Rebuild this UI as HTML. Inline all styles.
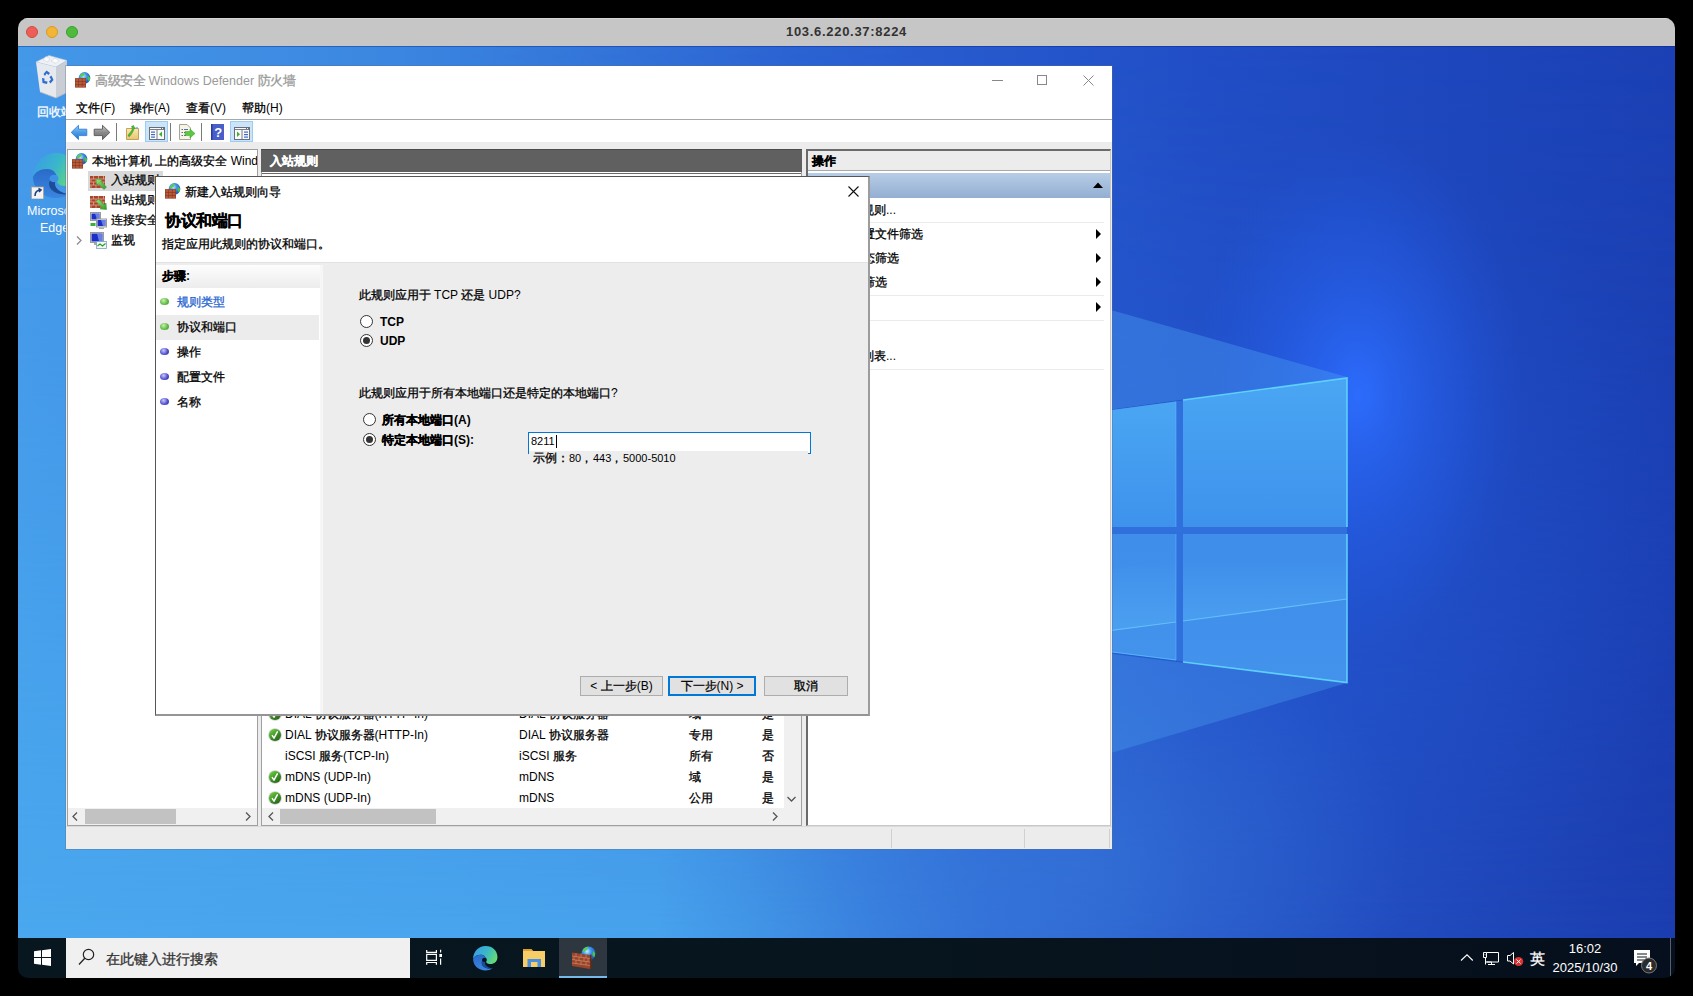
<!DOCTYPE html>
<html><head><meta charset="utf-8">
<style>
*{margin:0;padding:0;box-sizing:border-box}
html,body{width:1693px;height:996px;overflow:hidden;background:#000;font-family:"Liberation Sans",sans-serif}
.a{position:absolute}
.t{position:absolute;white-space:nowrap}
i.c{font-style:normal;display:inline-block;width:1em;text-align:left;-webkit-text-stroke:0.3px currentColor}
#wrap{position:absolute;left:0;top:0;width:1693px;height:996px;clip-path:inset(18px 18px 18px 18px round 10px)}
</style></head><body>
<svg width="0" height="0" style="position:absolute">
<defs>
<g id="fwicon"><radialGradient id="glb" cx="0.4" cy="0.35" r="0.7"><stop offset="0" stop-color="#bfe4ff"/><stop offset="0.45" stop-color="#3a8ef0"/><stop offset="1" stop-color="#1a4ab0"/></radialGradient><circle cx="9.5" cy="5.9" r="5.8" fill="url(#glb)"/><path d="M4.5 4.5C5.5 2 8 0.8 10 1L9 3.5L6.5 5Z" fill="#5ad040"/><path d="M12.5 3.5L14.8 5.5C15.2 7 14.8 8.5 14 9.5L12.5 7.5Z" fill="#4ac838"/><rect x="0" y="6.2" width="11" height="9.3" fill="#7a3018"/><path d="M0.4 6.6H3.4V9.2H0.4ZM3.9 6.6H6.9V9.2H3.9ZM7.4 6.6H10.6V9.2H7.4ZM0.4 9.7H3.4V12.3H0.4ZM3.9 9.7H6.9V12.3H3.9ZM7.4 9.7H10.6V12.3H7.4ZM0.4 12.8H3.4V15.2H0.4ZM3.9 12.8H6.9V15.2H3.9ZM7.4 12.8H10.6V15.2H7.4Z" fill="#b85a3a"/></g>
<g id="brick"><rect x="0" y="0" width="15" height="12" fill="#a8452a"/><path d="M0 3H15M0 6H15M0 9H15M3.5 0V3M8.5 0V3M13.5 0V3M1 3V6M6 3V6M11 3V6M3.5 6V9M8.5 6V9M13.5 6V9M1 9V12M6 9V12M11 9V12" stroke="#e0a58c" stroke-width="0.8"/></g>
<linearGradient id="chg" x1="0.2" y1="0.1" x2="0.8" y2="0.9"><stop offset="0" stop-color="#66c83a"/><stop offset="0.6" stop-color="#3a8a24"/><stop offset="1" stop-color="#2c6a1c"/></linearGradient><g id="chk"><circle cx="7" cy="7" r="6.8" fill="#a0a0a0" opacity="0.55"/><circle cx="7" cy="7" r="6" fill="url(#chg)"/><path d="M4.3 7.6L6 10.2L9.3 3.8" stroke="#fff" stroke-width="1.5" fill="none" stroke-linecap="round" stroke-linejoin="round"/></g>
<linearGradient id="garr" x1="0" y1="0" x2="1" y2="1"><stop offset="0" stop-color="#9ae880"/><stop offset="1" stop-color="#2f9a2a"/></linearGradient>
</defs></svg>
<div id="wrap">
<div class="a" style="left:18px;top:18px;width:1657px;height:28px;background:#c6c6c6;border-top:1px solid #d6d6d6"></div>
<div class="a" style="left:26px;top:26px;width:12px;height:12px;border-radius:50%;background:#ec5f57;border:0.5px solid #d44a42"></div>
<div class="a" style="left:46px;top:26px;width:12px;height:12px;border-radius:50%;background:#f3b535;border:0.5px solid #d89b24"></div>
<div class="a" style="left:66px;top:26px;width:12px;height:12px;border-radius:50%;background:#4fbb3d;border:0.5px solid #3a9f2c"></div>
<div class="t" style="left:18px;top:24px;width:1657px;text-align:center;font-size:13px;line-height:16px;font-weight:bold;color:#333;letter-spacing:0.7px">103.6.220.37:8224</div>
<svg class="a" style="left:0;top:0" width="1693" height="996" viewBox="0 0 1693 996">
<defs>
<linearGradient id="bgB" gradientUnits="userSpaceOnUse" x1="18" y1="0" x2="1675" y2="0">
<stop offset="0" stop-color="#4aa8ef"/><stop offset="0.385" stop-color="#48a3ed"/><stop offset="0.47" stop-color="#3f90e4"/><stop offset="0.59" stop-color="#3270da"/><stop offset="0.714" stop-color="#2656c8"/><stop offset="1" stop-color="#1b3db0"/>
</linearGradient>
<linearGradient id="bgT" gradientUnits="userSpaceOnUse" x1="18" y1="0" x2="1675" y2="0">
<stop offset="0" stop-color="#4498e8"/><stop offset="0.23" stop-color="#3b86e0"/><stop offset="0.47" stop-color="#2b62d2"/><stop offset="0.71" stop-color="#214ec6"/><stop offset="1" stop-color="#1b40b4"/>
</linearGradient>
<linearGradient id="vmask" gradientUnits="userSpaceOnUse" x1="0" y1="46" x2="0" y2="938">
<stop offset="0" stop-color="#fff"/><stop offset="0.35" stop-color="#fff" stop-opacity="0.8"/><stop offset="1" stop-color="#fff" stop-opacity="0"/>
</linearGradient>
<mask id="m1" maskUnits="userSpaceOnUse" x="0" y="0" width="1693" height="996"><rect x="18" y="46" width="1657" height="892" fill="url(#vmask)"/></mask>
<radialGradient id="glow" gradientUnits="userSpaceOnUse" cx="0" cy="0" r="1" gradientTransform="translate(1358 395) scale(165 260)">
<stop offset="0" stop-color="#2c6cfc" stop-opacity="1"/><stop offset="0.35" stop-color="#2864f2" stop-opacity="0.65"/><stop offset="1" stop-color="#2258e0" stop-opacity="0"/>
</radialGradient>
<radialGradient id="glow2" gradientUnits="userSpaceOnUse" cx="1300" cy="560" r="420">
<stop offset="0" stop-color="#2258d8" stop-opacity="0.45"/><stop offset="1" stop-color="#2258d8" stop-opacity="0"/>
</radialGradient>
<linearGradient id="paneU" x1="0" y1="0" x2="0" y2="1">
<stop offset="0" stop-color="#4aa6f3"/><stop offset="1" stop-color="#3e92ec"/>
</linearGradient>
<linearGradient id="paneL" x1="0" y1="0" x2="0" y2="1">
<stop offset="0" stop-color="#3e8eea"/><stop offset="1" stop-color="#4392ec"/>
</linearGradient>
<linearGradient id="refl" gradientUnits="userSpaceOnUse" x1="0" y1="560" x2="0" y2="625"><stop offset="0" stop-color="#56b0f6" stop-opacity="0"/><stop offset="1" stop-color="#56b0f6" stop-opacity="0.45"/></linearGradient>
<radialGradient id="glow3" gradientUnits="userSpaceOnUse" cx="0" cy="0" r="1" gradientTransform="translate(1080 860) scale(330 260)"><stop offset="0" stop-color="#3878d8" stop-opacity="0.55"/><stop offset="1" stop-color="#3878d8" stop-opacity="0"/></radialGradient>
</defs>
<rect x="18" y="46" width="1657" height="892" fill="url(#bgB)"/>
<rect x="18" y="46" width="1657" height="892" fill="url(#bgT)" mask="url(#m1)"/>
<rect x="18" y="46" width="1657" height="892" fill="url(#glow2)"/>
<rect x="18" y="46" width="1657" height="892" fill="url(#glow3)"/>
<rect x="18" y="46" width="1657" height="892" fill="url(#glow)"/>
<polygon points="1347,377 1111,310 1000,278 1000,425" fill="#4a9cf0" opacity="0.42"/>
<polygon points="1347,683 1111,753 1000,790 1000,640" fill="#4a9cf0" opacity="0.38"/>
<rect x="18" y="46" width="1657" height="1" fill="#001a80" opacity="0.35"/>
<!-- logo -->
<polygon points="1000,425 1347,378 1347,682.5 1000,638" fill="#2f70dc"/>
<polygon points="1000,425 1176,401.5 1176,527 1000,527" fill="url(#paneU)"/>
<polygon points="1183,400 1347,378 1347,527 1183,527" fill="url(#paneU)"/>
<polygon points="1000,534 1176,534 1176,660 1000,638" fill="url(#paneL)"/>
<polygon points="1183,534 1347,534 1347,682.5 1183,662" fill="url(#paneL)"/>
<polygon points="1000,585 1176,560 1176,622 1000,645" fill="url(#refl)"/>
<polygon points="1183,560 1347,538 1347,599 1183,621" fill="url(#refl)"/>
<path d="M1183,400 L1347,378 L1347,527" stroke="#62d8ff" stroke-width="1.6" fill="none" opacity="0.9"/>
<path d="M1347,534 L1347,682.5 L1183,662" stroke="#62d8ff" stroke-width="1.6" fill="none" opacity="0.9"/><path d="M1176,660 L1000,638" stroke="#62d8ff" stroke-width="1.2" fill="none" opacity="0.6"/>
<path d="M1176,401.5 L1176,527 M1176,534 L1176,660" stroke="#60c0ff" stroke-width="1" fill="none" opacity="0.5"/>
<path d="M1183,621 L1347,599 M1000,645 L1176,622" stroke="#70d0ff" stroke-width="1.2" fill="none" opacity="0.7"/>
</svg>
<!-- desktop icons -->
<svg class="a" style="left:34px;top:54px" width="34" height="46" viewBox="0 0 34 46"><path d="M2 8L15 1.5L33 6.5L22 13Z" fill="#eef1f5" stroke="#b8c8d8" stroke-width="0.6"/><path d="M9 6L12 2.5L16 4.5L14 8ZM17 7L21 4L25 6.5L22 9.5Z" fill="#fafbfc" stroke="#c8ccd4" stroke-width="0.5"/><path d="M2 8L22 13L22 44L6 38Z" fill="#e6e9ed"/><path d="M22 13L33 6.5L32 39L22 44Z" fill="#c9ced6"/><path d="M6 38L22 44L32 39" stroke="#b0b6be" stroke-width="0.8" fill="none"/><g fill="#2f6fd0"><path d="M9.5 20L12.5 16.5L16 19L14.5 21L12.5 19.5L11 22Z"/><path d="M17.5 21.5L19.5 26L16.5 29.5L15 27.5L17 25.5L15.5 23Z"/><path d="M13 30L8.5 29L8 24L10.5 24.5L10.5 27L13.5 27.5Z"/></g></svg>
<div class="t" style="left:37px;top:104px;font-size:12px;line-height:16px;color:#fff"><i class="c">回</i><i class="c">收</i><i class="c">站</i></div>
<svg class="a" style="left:31px;top:151px" width="48" height="48" viewBox="0 0 48 48"><defs><linearGradient id="eg1" x1="0" y1="0.3" x2="1" y2="0.7"><stop offset="0" stop-color="#3a9ee6"/><stop offset="0.5" stop-color="#3ab8c8"/><stop offset="1" stop-color="#6ade6a"/></linearGradient><linearGradient id="eg4" x1="0" y1="0" x2="0" y2="1"><stop offset="0" stop-color="#2a6ac8"/><stop offset="1" stop-color="#3a86e0"/></linearGradient></defs>
<path d="M2 26C2 13 12 2 25 2C38 2 47 11 47 22C47 30 41 35 34 35C28 35 25 32 26 28C26 22 22 18 16 18C9 18 4 21 2 26Z" fill="url(#eg1)"/>
<path d="M2 26C4 21 9 18 16 18C22 18 26 22 26 28C22 26 18 28 18 33C18 40 28 45 38 43C34 46 30 47 25 47C12 47 2 38 2 26Z" fill="url(#eg4)"/>
<path d="M26 28C22 26 18 28 18 33C18 40 28 45 38 43C30 42 24 38 24 33C24 30 25 29 26 28Z" fill="#1d4c98"/>
<ellipse cx="23" cy="27.5" rx="4.5" ry="3.8" fill="#3d92e6"/>
<rect x="0.5" y="36" width="12" height="12" fill="#f4f4f4" stroke="#b0a090" stroke-width="0.8"/><path d="M4 45C4 41 6 39 10 39M7.5 37.5L10 39L8 41" stroke="#1e3f80" stroke-width="1.6" fill="none"/></svg>
<div class="t" style="left:27px;top:203px;font-size:12.5px;line-height:16px;color:#fff">Microsoft</div>
<div class="t" style="left:40px;top:220px;font-size:12.5px;line-height:16px;color:#fff">Edge</div>
<!-- firewall window -->
<div class="a" style="left:66px;top:66px;width:1046px;height:783px;background:#fff;box-shadow:0 0 0 1px rgba(90,110,140,0.35)"></div>
<svg class="a" style="left:75px;top:72px" width="16" height="16" viewBox="0 0 16 16"><use href="#fwicon"/></svg>
<div class="t" style="left:95px;top:73px;font-size:12.5px;color:#9a9a9a;line-height:16px"><i class="c">高</i><i class="c">级</i><i class="c">安</i><i class="c">全</i> Windows Defender <i class="c">防</i><i class="c">火</i><i class="c">墙</i></div>
<div class="a" style="left:992px;top:80px;width:11px;height:1px;background:#888"></div>
<div class="a" style="left:1037px;top:75px;width:10px;height:10px;border:1px solid #888"></div>
<svg class="a" style="left:1083px;top:75px" width="11" height="11" viewBox="0 0 11 11"><path d="M0.5 0.5L10.5 10.5M10.5 0.5L0.5 10.5" stroke="#888" stroke-width="1"/></svg>
<!-- menu -->
<div class="t" style="left:76px;top:100px;font-size:12px;color:#000;line-height:16px"><i class="c">文</i><i class="c">件</i>(F)</div>
<div class="t" style="left:130px;top:100px;font-size:12px;color:#000;line-height:16px"><i class="c">操</i><i class="c">作</i>(A)</div>
<div class="t" style="left:186px;top:100px;font-size:12px;color:#000;line-height:16px"><i class="c">查</i><i class="c">看</i>(V)</div>
<div class="t" style="left:242px;top:100px;font-size:12px;color:#000;line-height:16px"><i class="c">帮</i><i class="c">助</i>(H)</div>
<div class="a" style="left:66px;top:119px;width:1046px;height:1px;background:#a8a8a8"></div>
<!-- toolbar -->
<svg class="a" style="left:66px;top:120px" width="200" height="22" viewBox="0 0 200 22">
<defs>
<linearGradient id="ab" x1="0" y1="0" x2="0" y2="1"><stop offset="0" stop-color="#8ccaf8"/><stop offset="0.5" stop-color="#4a9ce8"/><stop offset="1" stop-color="#2a70d0"/></linearGradient>
<linearGradient id="ag" x1="0" y1="0" x2="0" y2="1"><stop offset="0" stop-color="#c8c8c8"/><stop offset="0.5" stop-color="#8a8a8a"/><stop offset="1" stop-color="#6a6a6a"/></linearGradient>
<linearGradient id="fo" x1="0" y1="0" x2="0" y2="1"><stop offset="0" stop-color="#fbe9b0"/><stop offset="1" stop-color="#e8c470"/></linearGradient>
</defs>
<path d="M5.2 12.4L12.5 5.3V9.2H20.8V15.6H12.5V19.6Z" fill="url(#ab)" stroke="#3a80d0" stroke-width="0.9" stroke-linejoin="round"/>
<path d="M43.8 12.4L36.5 5.3V9.2H28.2V15.6H36.5V19.6Z" fill="url(#ag)" stroke="#555" stroke-width="0.9" stroke-linejoin="round"/>
<rect x="50" y="3" width="1" height="18" fill="#7a7a7a"/>
<path d="M60.5 8.5H72.5V19.5H60.5Z" fill="url(#fo)" stroke="#c09a48" stroke-width="0.9"/>
<rect x="69.5" y="7.3" width="2.5" height="1.3" fill="#6aa8e8"/>
<path d="M62 16C63 13 65 12 66 10C66.5 8.5 66 7.5 65.5 6.5L67.5 5.5L69 8.5L67.8 8.8C67.5 11 66.5 13 63.5 16.5Z" fill="#4ac030" stroke="#2a8a20" stroke-width="0.5"/>
<rect x="79.5" y="1.5" width="22" height="20" fill="#cce4f7" stroke="#99cdf5"/>
<rect x="83.5" y="7.5" width="15" height="12" fill="#fafafa" stroke="#6a6e7a" stroke-width="1"/>
<path d="M84 9.5H98M91 10V19" stroke="#6a6e7a" stroke-width="0.9"/><rect x="95" y="8" width="1" height="1" fill="#6a6e7a"/><rect x="97" y="8" width="1" height="1" fill="#6a6e7a"/>
<rect x="85" y="11.5" width="4" height="1.2" fill="#3a68c8"/><rect x="85" y="14" width="4" height="1.2" fill="#3a68c8"/><rect x="85" y="16.5" width="4" height="1.2" fill="#3a68c8"/>
<path d="M96 11.5L93 14.2L96 17Z" fill="#3ab030"/>
<rect x="104" y="3" width="1" height="18" fill="#7a7a7a"/>
<path d="M113.5 4.5H121L124.5 8V19.5H113.5Z" fill="#f8f4e4" stroke="#9a9a8a" stroke-width="0.9"/>
<path d="M115.5 9.5H117M115.5 12.5H117M115.5 15.5H117M118 9.5H122M118 12.5H120M118 15.5H120" stroke="#5a6ab0" stroke-width="1"/>
<path d="M119 11.5H124V9L129 13.5L124 18V15.5H119Z" fill="#5ac840" stroke="#3a9a28" stroke-width="0.5"/>
<rect x="135" y="3" width="1" height="18" fill="#7a7a7a"/>
<rect x="145" y="4" width="13" height="16" fill="#2a3aa0"/><rect x="146.5" y="4" width="11.5" height="16" fill="#4a5ec8"/>
<text x="152.3" y="17" font-size="13" font-weight="bold" font-family="Liberation Sans" fill="#fff" text-anchor="middle">?</text>
<rect x="164.5" y="1.5" width="22" height="20" fill="#cce4f7" stroke="#99cdf5"/>
<rect x="168.5" y="7.5" width="15" height="12" fill="#fafafa" stroke="#6a6e7a" stroke-width="1"/>
<path d="M169 9.5H183M176 10V19" stroke="#6a6e7a" stroke-width="0.9"/><rect x="180" y="8" width="1" height="1" fill="#6a6e7a"/><rect x="182" y="8" width="1" height="1" fill="#6a6e7a"/>
<rect x="178" y="11.5" width="4" height="1.2" fill="#3a68c8"/><rect x="178" y="14" width="4" height="1.2" fill="#3a68c8"/><rect x="178" y="16.5" width="4" height="1.2" fill="#3a68c8"/>
<path d="M171 11.5L174 14.2L171 17Z" fill="#3ab030"/>
</svg>
<!-- client area -->
<div class="a" style="left:66px;top:142px;width:1046px;height:707px;background:#ececec"></div>
<!-- tree pane -->
<div class="a" style="left:67px;top:149px;width:191px;height:677px;background:#fff;border:1px solid #a0a0a0"></div>
<svg class="a" style="left:72px;top:153px" width="16" height="16" viewBox="0 0 16 16"><use href="#fwicon"/></svg>
<div class="t" style="left:92px;top:153px;width:165px;overflow:hidden;font-size:12px;line-height:16px;color:#000"><i class="c">本</i><i class="c">地</i><i class="c">计</i><i class="c">算</i><i class="c">机</i> <i class="c">上</i><i class="c">的</i><i class="c">高</i><i class="c">级</i><i class="c">安</i><i class="c">全</i> Windows Defender <i class="c">防</i><i class="c">火</i><i class="c">墙</i></div>
<div class="a" style="left:88px;top:171px;width:75px;height:20px;background:#d9d9d9"></div>
<svg class="a" style="left:90px;top:176px" width="17" height="14" viewBox="0 0 17 14"><use href="#brick"/><path d="M6 3L12.5 3.5L10.8 5.2L16.5 11L14 13.5L8.3 7.7L6.5 9.5Z" fill="url(#garr)" stroke="#3a8a30" stroke-width="0.5"/></svg>
<div class="t" style="left:111px;top:172px;font-size:12px;line-height:16px;color:#000"><i class="c">入</i><i class="c">站</i><i class="c">规</i><i class="c">则</i></div>
<svg class="a" style="left:90px;top:196px" width="17" height="14" viewBox="0 0 17 14"><use href="#brick"/><path d="M16.5 13.5L10 13L11.7 11.3L6 5.5L8.5 3L14.2 8.8L16 7Z" fill="url(#garr)" stroke="#3a8a30" stroke-width="0.5"/></svg>
<div class="t" style="left:111px;top:192px;font-size:12px;line-height:16px;color:#000"><i class="c">出</i><i class="c">站</i><i class="c">规</i><i class="c">则</i></div>
<svg class="a" style="left:90px;top:212px" width="17" height="17" viewBox="0 0 17 17"><rect x="0.5" y="0.5" width="10" height="8" fill="#e8e8e8" stroke="#9a9a9a"/><rect x="1.5" y="1.5" width="8" height="6" fill="#1a30c8"/><path d="M5 1.5L9.5 1.5V7.5L7 7.5Z" fill="#8aa0f0" opacity="0.7"/><rect x="6.5" y="7" width="10" height="8" fill="#e8e8e8" stroke="#9a9a9a"/><rect x="7.5" y="8" width="8" height="6" fill="#1a30c8"/><path d="M11 8L15.5 8V14L13 14Z" fill="#8aa0f0" opacity="0.7"/><rect x="0.5" y="11" width="5" height="3" fill="#3ab03a"/><rect x="9" y="15.5" width="5" height="1.5" fill="#aaa"/></svg>
<div class="t" style="left:111px;top:212px;font-size:12px;line-height:16px;color:#000"><i class="c">连</i><i class="c">接</i><i class="c">安</i><i class="c">全</i><i class="c">规</i><i class="c">则</i></div>
<svg class="a" style="left:76px;top:236px" width="6" height="9" viewBox="0 0 6 9"><path d="M1 0.5L5 4.5L1 8.5" stroke="#8a8a8a" fill="none" stroke-width="1.2"/></svg>
<svg class="a" style="left:90px;top:232px" width="17" height="17" viewBox="0 0 17 17"><rect x="0.5" y="0.5" width="13" height="10" fill="#e8e8e8" stroke="#9a9a9a"/><rect x="1.5" y="1.5" width="11" height="8" fill="#1a30c8"/><path d="M7 1.5L12.5 1.5V9.5L9 9.5Z" fill="#8aa0f0" opacity="0.7"/><rect x="4" y="11" width="5" height="2" fill="#aaa"/><rect x="6.5" y="9.5" width="10" height="7" fill="#f0f8f0" stroke="#7aa0c8" stroke-width="0.8"/><path d="M7.5 14L10 12L12.5 14L15.5 11.5" stroke="#2a9a2a" fill="none" stroke-width="1.1"/></svg>
<div class="t" style="left:111px;top:232px;font-size:12px;line-height:16px;color:#000"><i class="c">监</i><i class="c">视</i></div>
<!-- tree scrollbar -->
<div class="a" style="left:68px;top:808px;width:189px;height:17px;background:#f0f0f0"></div>
<div class="a" style="left:85px;top:809px;width:91px;height:15px;background:#c2c2c2"></div>
<svg class="a" style="left:72px;top:812px" width="6" height="9" viewBox="0 0 6 9"><path d="M5 0.5L1 4.5L5 8.5" stroke="#555" fill="none" stroke-width="1.3"/></svg>
<svg class="a" style="left:245px;top:812px" width="6" height="9" viewBox="0 0 6 9"><path d="M1 0.5L5 4.5L1 8.5" stroke="#555" fill="none" stroke-width="1.3"/></svg>
<!-- center pane -->
<div class="a" style="left:261px;top:149px;width:541px;height:677px;background:#fff;border:1px solid #a0a0a0"></div>
<div class="a" style="left:261px;top:149px;width:541px;height:23px;background:#606060;border-top:1px solid #4a4a4a"></div>
<div class="t" style="left:270px;top:153px;font-size:12px;line-height:16px;color:#fff;font-weight:bold"><i class="c">入</i><i class="c">站</i><i class="c">规</i><i class="c">则</i></div>
<div class="a" style="left:262px;top:173px;width:539px;height:3px;border-top:1px solid #6a6a6a;background:#fff"></div>
<!-- list rows -->
<svg class="a" style="left:268px;top:707px" width="14" height="14" viewBox="0 0 14 14"><use href="#chk"/></svg>
<div class="t" style="left:285px;top:706px;font-size:12px;line-height:16px;color:#000">DIAL <i class="c">协</i><i class="c">议</i><i class="c">服</i><i class="c">务</i><i class="c">器</i>(HTTP-In)</div>
<div class="t" style="left:519px;top:706px;font-size:12px;line-height:16px;color:#000">DIAL <i class="c">协</i><i class="c">议</i><i class="c">服</i><i class="c">务</i><i class="c">器</i></div>
<div class="t" style="left:689px;top:706px;font-size:12px;line-height:16px;color:#000"><i class="c">域</i></div>
<div class="t" style="left:762px;top:706px;font-size:12px;line-height:16px;color:#000"><i class="c">是</i></div>
<svg class="a" style="left:268px;top:728px" width="14" height="14" viewBox="0 0 14 14"><use href="#chk"/></svg>
<div class="t" style="left:285px;top:727px;font-size:12px;line-height:16px;color:#000">DIAL <i class="c">协</i><i class="c">议</i><i class="c">服</i><i class="c">务</i><i class="c">器</i>(HTTP-In)</div>
<div class="t" style="left:519px;top:727px;font-size:12px;line-height:16px;color:#000">DIAL <i class="c">协</i><i class="c">议</i><i class="c">服</i><i class="c">务</i><i class="c">器</i></div>
<div class="t" style="left:689px;top:727px;font-size:12px;line-height:16px;color:#000"><i class="c">专</i><i class="c">用</i></div>
<div class="t" style="left:762px;top:727px;font-size:12px;line-height:16px;color:#000"><i class="c">是</i></div>
<div class="t" style="left:285px;top:748px;font-size:12px;line-height:16px;color:#000">iSCSI <i class="c">服</i><i class="c">务</i>(TCP-In)</div>
<div class="t" style="left:519px;top:748px;font-size:12px;line-height:16px;color:#000">iSCSI <i class="c">服</i><i class="c">务</i></div>
<div class="t" style="left:689px;top:748px;font-size:12px;line-height:16px;color:#000"><i class="c">所</i><i class="c">有</i></div>
<div class="t" style="left:762px;top:748px;font-size:12px;line-height:16px;color:#000"><i class="c">否</i></div>
<svg class="a" style="left:268px;top:770px" width="14" height="14" viewBox="0 0 14 14"><use href="#chk"/></svg>
<div class="t" style="left:285px;top:769px;font-size:12px;line-height:16px;color:#000">mDNS (UDP-In)</div>
<div class="t" style="left:519px;top:769px;font-size:12px;line-height:16px;color:#000">mDNS</div>
<div class="t" style="left:689px;top:769px;font-size:12px;line-height:16px;color:#000"><i class="c">域</i></div>
<div class="t" style="left:762px;top:769px;font-size:12px;line-height:16px;color:#000"><i class="c">是</i></div>
<svg class="a" style="left:268px;top:791px" width="14" height="14" viewBox="0 0 14 14"><use href="#chk"/></svg>
<div class="t" style="left:285px;top:790px;font-size:12px;line-height:16px;color:#000">mDNS (UDP-In)</div>
<div class="t" style="left:519px;top:790px;font-size:12px;line-height:16px;color:#000">mDNS</div>
<div class="t" style="left:689px;top:790px;font-size:12px;line-height:16px;color:#000"><i class="c">公</i><i class="c">用</i></div>
<div class="t" style="left:762px;top:790px;font-size:12px;line-height:16px;color:#000"><i class="c">是</i></div>
<!-- center scrollbars -->
<div class="a" style="left:784px;top:176px;width:17px;height:632px;background:#f0f0f0"></div>
<svg class="a" style="left:787px;top:796px" width="9" height="6" viewBox="0 0 9 6"><path d="M0.5 1L4.5 5L8.5 1" stroke="#555" fill="none" stroke-width="1.3"/></svg>
<div class="a" style="left:262px;top:808px;width:539px;height:17px;background:#f0f0f0"></div>
<div class="a" style="left:280px;top:809px;width:156px;height:15px;background:#c2c2c2"></div>
<svg class="a" style="left:268px;top:812px" width="6" height="9" viewBox="0 0 6 9"><path d="M5 0.5L1 4.5L5 8.5" stroke="#555" fill="none" stroke-width="1.3"/></svg>
<svg class="a" style="left:772px;top:812px" width="6" height="9" viewBox="0 0 6 9"><path d="M1 0.5L5 4.5L1 8.5" stroke="#555" fill="none" stroke-width="1.3"/></svg>
<!-- right pane -->
<div class="a" style="left:806px;top:149px;width:305px;height:677px;background:#fff;border-left:2px solid #6a6a6a;border-top:2px solid #6a6a6a;border-right:1px solid #c8c8c8;border-bottom:1px solid #c8c8c8"></div>
<div class="a" style="left:808px;top:151px;width:302px;height:20px;background:#ececec;border-bottom:1px solid #a8a8a8"></div>
<div class="t" style="left:812px;top:153px;font-size:12px;line-height:16px;color:#000;font-weight:bold"><i class="c">操</i><i class="c">作</i></div>
<div class="a" style="left:808px;top:173px;width:302px;height:25px;background:linear-gradient(#b7cde6,#93aed2)"></div>
<svg class="a" style="left:1093px;top:182px" width="10" height="6" viewBox="0 0 10 6"><path d="M0 6L5 0.5L10 6Z" fill="#000"/></svg>
<div class="t" style="left:700px;top:202px;width:196px;text-align:right;font-size:12px;line-height:16px;color:#000"><i class="c">新</i><i class="c">建</i><i class="c">规</i><i class="c">则</i>...</div>
<div class="a" style="left:812px;top:222px;width:292px;height:1px;background:#ebebeb"></div>
<div class="t" style="left:700px;top:226px;width:223px;text-align:right;font-size:12px;line-height:16px;color:#000"><i class="c">按</i><i class="c">配</i><i class="c">置</i><i class="c">文</i><i class="c">件</i><i class="c">筛</i><i class="c">选</i></div>
<svg class="a" style="left:1096px;top:229px" width="5" height="10" viewBox="0 0 5 10"><path d="M0 0L5 5L0 10Z" fill="#000"/></svg>
<div class="t" style="left:700px;top:250px;width:199px;text-align:right;font-size:12px;line-height:16px;color:#000"><i class="c">按</i><i class="c">状</i><i class="c">态</i><i class="c">筛</i><i class="c">选</i></div>
<svg class="a" style="left:1096px;top:253px" width="5" height="10" viewBox="0 0 5 10"><path d="M0 0L5 5L0 10Z" fill="#000"/></svg>
<div class="t" style="left:700px;top:274px;width:187px;text-align:right;font-size:12px;line-height:16px;color:#000"><i class="c">按</i><i class="c">组</i><i class="c">筛</i><i class="c">选</i></div>
<svg class="a" style="left:1096px;top:277px" width="5" height="10" viewBox="0 0 5 10"><path d="M0 0L5 5L0 10Z" fill="#000"/></svg>
<div class="a" style="left:812px;top:295px;width:292px;height:1px;background:#ebebeb"></div>
<svg class="a" style="left:1096px;top:302px" width="5" height="10" viewBox="0 0 5 10"><path d="M0 0L5 5L0 10Z" fill="#000"/></svg>
<div class="a" style="left:812px;top:320px;width:292px;height:1px;background:#ebebeb"></div>
<div class="t" style="left:700px;top:348px;width:196px;text-align:right;font-size:12px;line-height:16px;color:#000"><i class="c">导</i><i class="c">出</i><i class="c">列</i><i class="c">表</i>...</div>
<div class="a" style="left:812px;top:369px;width:292px;height:1px;background:#ebebeb"></div>
<!-- status bar -->
<div class="a" style="left:66px;top:826px;width:1046px;height:23px;background:#ececec;border-top:1px solid #dadada"></div>
<div class="a" style="left:891px;top:829px;width:1px;height:19px;background:#d0d0d0"></div>
<div class="a" style="left:1024px;top:829px;width:1px;height:19px;background:#d0d0d0"></div>
<div class="a" style="left:1109px;top:829px;width:1px;height:19px;background:#d0d0d0"></div>
<!-- dialog -->
<div class="a" style="left:155px;top:176px;width:715px;height:540px;background:#fff;border-left:1px solid #555;border-top:1px solid #555;border-right:2px solid #9c9c9c;border-bottom:2px solid #959595"></div>
<svg class="a" style="left:165px;top:183px" width="16" height="16" viewBox="0 0 16 16"><use href="#fwicon"/></svg>
<div class="t" style="left:185px;top:184px;font-size:12px;line-height:16px;color:#000"><i class="c">新</i><i class="c">建</i><i class="c">入</i><i class="c">站</i><i class="c">规</i><i class="c">则</i><i class="c">向</i><i class="c">导</i></div>
<svg class="a" style="left:848px;top:186px" width="11" height="11" viewBox="0 0 11 11"><path d="M0.5 0.5L10.5 10.5M10.5 0.5L0.5 10.5" stroke="#111" stroke-width="1.1"/></svg>
<div class="t" style="left:165px;top:211px;font-size:15.5px;line-height:19px;color:#000;font-weight:bold"><i class="c">协</i><i class="c">议</i><i class="c">和</i><i class="c">端</i><i class="c">口</i></div>
<div class="t" style="left:162px;top:236px;font-size:12px;line-height:16px;color:#000"><i class="c">指</i><i class="c">定</i><i class="c">应</i><i class="c">用</i><i class="c">此</i><i class="c">规</i><i class="c">则</i><i class="c">的</i><i class="c">协</i><i class="c">议</i><i class="c">和</i><i class="c">端</i><i class="c">口</i><i class="c">。</i></div>
<div class="a" style="left:156px;top:262px;width:712px;height:452px;background:#ededed;border-top:1px solid #e2e2e2"></div>
<!-- steps pane -->
<div class="a" style="left:156px;top:265px;width:164px;height:449px;background:#fff"></div>
<div class="a" style="left:320px;top:265px;width:3px;height:449px;background:#f6f6f6"></div>
<div class="a" style="left:156px;top:265px;width:164px;height:23px;background:linear-gradient(#fdfdfd,#ececec)"></div>
<div class="t" style="left:162px;top:268px;font-size:12px;line-height:16px;color:#000;font-weight:bold"><i class="c">步</i><i class="c">骤</i>:</div>
<div class="a" style="left:160px;top:298px;width:9px;height:7px;border-radius:50%;background:radial-gradient(circle at 40% 35%,#c8f0b0,#5ab840 60%,#3a9a2a)"></div>
<div class="t" style="left:177px;top:294px;font-size:12px;line-height:16px;color:#2463d0"><i class="c">规</i><i class="c">则</i><i class="c">类</i><i class="c">型</i></div>
<div class="a" style="left:156px;top:315px;width:163px;height:25px;background:#ececec"></div>
<div class="a" style="left:160px;top:323px;width:9px;height:7px;border-radius:50%;background:radial-gradient(circle at 40% 35%,#c8f0b0,#5ab840 60%,#3a9a2a)"></div>
<div class="t" style="left:177px;top:319px;font-size:12px;line-height:16px;color:#000"><i class="c">协</i><i class="c">议</i><i class="c">和</i><i class="c">端</i><i class="c">口</i></div>
<div class="a" style="left:160px;top:348px;width:9px;height:7px;border-radius:50%;background:radial-gradient(circle at 40% 35%,#c8c8ff,#4a4ac8 60%,#2a2a9a)"></div>
<div class="t" style="left:177px;top:344px;font-size:12px;line-height:16px;color:#000"><i class="c">操</i><i class="c">作</i></div>
<div class="a" style="left:160px;top:373px;width:9px;height:7px;border-radius:50%;background:radial-gradient(circle at 40% 35%,#c8c8ff,#4a4ac8 60%,#2a2a9a)"></div>
<div class="t" style="left:177px;top:369px;font-size:12px;line-height:16px;color:#000"><i class="c">配</i><i class="c">置</i><i class="c">文</i><i class="c">件</i></div>
<div class="a" style="left:160px;top:398px;width:9px;height:7px;border-radius:50%;background:radial-gradient(circle at 40% 35%,#c8c8ff,#4a4ac8 60%,#2a2a9a)"></div>
<div class="t" style="left:177px;top:394px;font-size:12px;line-height:16px;color:#000"><i class="c">名</i><i class="c">称</i></div>
<!-- content -->
<div class="t" style="left:359px;top:287px;font-size:12px;line-height:16px;color:#000"><i class="c">此</i><i class="c">规</i><i class="c">则</i><i class="c">应</i><i class="c">用</i><i class="c">于</i> TCP <i class="c">还</i><i class="c">是</i> UDP?</div>
<div class="a" style="left:360px;top:315px;width:13px;height:13px;border-radius:50%;background:#fff;border:1px solid #333"></div>
<div class="t" style="left:380px;top:314px;font-size:12px;line-height:16px;color:#000;font-weight:bold">TCP</div>
<div class="a" style="left:360px;top:334px;width:13px;height:13px;border-radius:50%;background:#fff;border:1px solid #333"></div>
<div class="a" style="left:363px;top:337px;width:7px;height:7px;border-radius:50%;background:#333"></div>
<div class="t" style="left:380px;top:333px;font-size:12px;line-height:16px;color:#000;font-weight:bold">UDP</div>
<div class="t" style="left:359px;top:385px;font-size:12px;line-height:16px;color:#000"><i class="c">此</i><i class="c">规</i><i class="c">则</i><i class="c">应</i><i class="c">用</i><i class="c">于</i><i class="c">所</i><i class="c">有</i><i class="c">本</i><i class="c">地</i><i class="c">端</i><i class="c">口</i><i class="c">还</i><i class="c">是</i><i class="c">特</i><i class="c">定</i><i class="c">的</i><i class="c">本</i><i class="c">地</i><i class="c">端</i><i class="c">口</i>?</div>
<div class="a" style="left:363px;top:413px;width:13px;height:13px;border-radius:50%;background:#fff;border:1px solid #333"></div>
<div class="t" style="left:382px;top:412px;font-size:12px;line-height:16px;color:#000;font-weight:bold"><i class="c">所</i><i class="c">有</i><i class="c">本</i><i class="c">地</i><i class="c">端</i><i class="c">口</i>(A)</div>
<div class="a" style="left:363px;top:433px;width:13px;height:13px;border-radius:50%;background:#fff;border:1px solid #333"></div>
<div class="a" style="left:366px;top:436px;width:7px;height:7px;border-radius:50%;background:#333"></div>
<div class="t" style="left:382px;top:432px;font-size:12px;line-height:16px;color:#000;font-weight:bold"><i class="c">特</i><i class="c">定</i><i class="c">本</i><i class="c">地</i><i class="c">端</i><i class="c">口</i>(S):</div>
<div class="a" style="left:528px;top:432px;width:283px;height:22px;background:#fff;border:1px solid #0078d7"></div>
<div class="a" style="left:529px;top:451px;width:279px;height:4px;background:#ededed"></div>
<div class="t" style="left:531px;top:434px;font-size:11px;line-height:14px;color:#000">8211</div>
<div class="a" style="left:556px;top:435px;width:1px;height:13px;background:#000"></div>
<div class="t" style="left:533px;top:451px;font-size:12px;line-height:14px;color:#000"><i class="c">示</i><i class="c">例</i><i class="c">：</i></div><div class="t" style="left:569px;top:451px;font-size:11px;line-height:14px;color:#000">80<i class="c">，</i></div><div class="t" style="left:593px;top:451px;font-size:11px;line-height:14px;color:#000">443<i class="c">，</i></div><div class="t" style="left:623px;top:451px;font-size:11px;line-height:14px;color:#000">5000-5010</div>
<!-- buttons -->
<div class="a" style="left:580px;top:676px;width:83px;height:20px;background:#e1e1e1;border:1px solid #adadad"></div>
<div class="t" style="left:580px;top:678px;width:83px;text-align:center;font-size:12px;line-height:16px;color:#000">&lt; <i class="c">上</i><i class="c">一</i><i class="c">步</i>(B)</div>
<div class="a" style="left:668px;top:676px;width:88px;height:20px;background:#e1e1e1;border:2px solid #0078d7"></div>
<div class="t" style="left:668px;top:678px;width:88px;text-align:center;font-size:12px;line-height:16px;color:#000"><i class="c">下</i><i class="c">一</i><i class="c">步</i>(N) &gt;</div>
<div class="a" style="left:764px;top:676px;width:84px;height:20px;background:#e1e1e1;border:1px solid #adadad"></div>
<div class="t" style="left:764px;top:678px;width:84px;text-align:center;font-size:12px;line-height:16px;color:#000"><i class="c">取</i><i class="c">消</i></div>
<!-- taskbar -->
<div class="a" style="left:18px;top:938px;width:1657px;height:40px;background:linear-gradient(90deg,#08171f 0%,#07161e 45%,#060f1d 100%)"></div>
<svg class="a" style="left:34px;top:949px" width="17" height="17" viewBox="0 0 17 17"><path d="M0 2.3L7 1.3V8H0ZM8 1.2L17 0V8H8ZM0 9H7V15.7L0 14.7ZM8 9H17V17L8 15.8Z" fill="#fff"/></svg>
<div class="a" style="left:66px;top:938px;width:344px;height:40px;background:#f0f0f0"></div>
<svg class="a" style="left:78px;top:948px" width="17" height="18" viewBox="0 0 17 18"><circle cx="10.5" cy="6.5" r="5.2" stroke="#222" stroke-width="1.2" fill="none"/><path d="M6.8 10.2L1 16.5" stroke="#222" stroke-width="1.3"/></svg>
<div class="t" style="left:106px;top:950px;font-size:14px;line-height:18px;color:#333"><i class="c">在</i><i class="c">此</i><i class="c">键</i><i class="c">入</i><i class="c">进</i><i class="c">行</i><i class="c">搜</i><i class="c">索</i></div>
<svg class="a" style="left:424px;top:948px" width="20" height="19" viewBox="0 0 20 19"><path d="M2.7 2V4.4H12.4V2M2.7 6.4H12.4V12.4H2.7ZM2.7 16.8V14.5H12.4V16.8M16.6 1.8V4.6M16.6 10.5V16.8" stroke="#fff" stroke-width="1.2" fill="none"/><rect x="15.4" y="6" width="2.6" height="3" fill="#fff"/></svg>
<svg class="a" style="left:472px;top:945px" width="26" height="26" viewBox="0 0 48 48"><defs><linearGradient id="eg2" x1="0" y1="0.3" x2="1" y2="0.7"><stop offset="0" stop-color="#3a9ee6"/><stop offset="0.5" stop-color="#3ab8c8"/><stop offset="1" stop-color="#6ade6a"/></linearGradient><linearGradient id="eg3" x1="0" y1="0" x2="0" y2="1"><stop offset="0" stop-color="#2a6ac8"/><stop offset="1" stop-color="#3a86e0"/></linearGradient></defs>
<path d="M2 26C2 13 12 2 25 2C38 2 47 11 47 22C47 30 41 35 34 35C28 35 25 32 26 28C26 22 22 18 16 18C9 18 4 21 2 26Z" fill="url(#eg2)"/>
<path d="M2 26C4 21 9 18 16 18C22 18 26 22 26 28C22 26 18 28 18 33C18 40 28 45 38 43C34 46 30 47 25 47C12 47 2 38 2 26Z" fill="url(#eg3)"/>
<path d="M26 28C22 26 18 28 18 33C18 40 28 45 38 43C30 42 24 38 24 33C24 30 25 29 26 28Z" fill="#1d4c98"/>
<ellipse cx="23" cy="27.5" rx="4.5" ry="3.8" fill="#07161e"/>
</svg>
<svg class="a" style="left:523px;top:948px" width="22" height="19" viewBox="0 0 22 19"><path d="M0 1H8.5L10 2.5V4H0Z" fill="#e0a030"/><rect x="0" y="3" width="22" height="16" fill="#f7cd68"/><path d="M4.5 19V11H18V19H14.5V14H8V19Z" fill="#4a8ee0"/></svg>
<div class="a" style="left:559px;top:938px;width:48px;height:40px;background:#2e3640"></div>
<div class="a" style="left:559px;top:976px;width:48px;height:2px;background:#76b9ed"></div>
<svg class="a" style="left:571px;top:946px" width="25" height="24" viewBox="0 0 25 24"><defs><radialGradient id="glb2" cx="0.4" cy="0.35" r="0.7"><stop offset="0" stop-color="#c8ecff"/><stop offset="0.4" stop-color="#3a9af0"/><stop offset="1" stop-color="#1a48b0"/></radialGradient></defs><circle cx="17.5" cy="7.5" r="7" fill="url(#glb2)"/><path d="M11.5 5C12.5 2 15 0.8 17 0.8L16 3.5L13 6Z" fill="#5ad040"/><path d="M22 5L24 7C24.3 9 23.8 10.5 23 11.5L21.5 9Z" fill="#4ac838"/><path d="M1 6.5L19 9V23L1 20Z" fill="#9a4428"/><path d="M19 9L20.5 8.3V22.3L19 23Z" fill="#6a2a18"/><path d="M1 10L19 12.5M1 13.5L19 16M1 17L19 19.5M5 7V11M10 7.5V11.5M15 8.3V12M3 10.5V14M8 11V15M13 11.8V15.5M17 12.3V16M5 14V18M10 14.8V18.5M15 15.4V19.3" stroke="#c88a70" stroke-width="0.7"/></svg>
<!-- tray -->
<svg class="a" style="left:1455px;top:944px" width="75" height="28" viewBox="0 0 75 28">
<path d="M6 16.5L12 10.8L17.8 16.5" stroke="#fff" stroke-width="1.1" fill="none"/>
<path d="M31.5 8.5H43.5V18H31.5M28.5 8.5H31.5V13.5H28.5ZM30.5 13.5V20.5M30.5 18H36.5V20.5M33 20.5H40" stroke="#fff" stroke-width="1" fill="none"/>
<path d="M29.8 10.3L30.5 11.2L31.2 10.3" stroke="#fff" stroke-width="0.7" fill="none"/>
<path d="M52.5 11.5H55L58.5 8.5V20L55 17H52.5Z" stroke="#fff" stroke-width="1" fill="none"/>
<circle cx="63.6" cy="17.5" r="4.6" fill="#d83232"/>
<path d="M61.6 15.5L65.6 19.5M65.6 15.5L61.6 19.5" stroke="#fff" stroke-width="1"/>
</svg>
<div class="t" style="left:1530px;top:949px;font-size:15px;line-height:19px;color:#fff"><i class="c">英</i></div>
<div class="t" style="left:1552px;top:940px;width:66px;text-align:center;font-size:13px;line-height:17px;color:#fff">16:02</div>
<div class="t" style="left:1552px;top:959px;width:66px;text-align:center;font-size:13px;line-height:17px;color:#fff">2025/10/30</div>
<svg class="a" style="left:1633px;top:949px" width="26" height="26" viewBox="0 0 26 26"><path d="M1 1H17V14H6L3 17V14H1Z" fill="#fff"/><path d="M4 5H14M4 8H14M4 11H11" stroke="#07161e" stroke-width="1"/><circle cx="16" cy="16.5" r="7.5" fill="#2b2b2b" stroke="#777" stroke-width="1"/><text x="16" y="20.5" font-size="11" font-weight="bold" text-anchor="middle" fill="#fff" font-family="Liberation Sans">4</text></svg>
<div class="a" style="left:1670px;top:938px;width:1px;height:39px;background:#5a6068"></div>
</div>
</body></html>
